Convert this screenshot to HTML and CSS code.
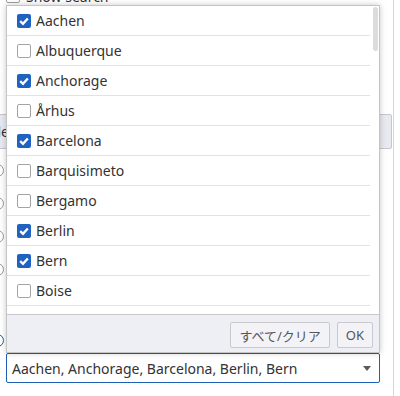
FILE: index.html
```html
<html>
<head>
    <link rel="stylesheet" href="styles.css">
</head>
<body>
<div class="page">
    <div class="opt-row">
        <span class="box"></span>
        <span>Show search</span>
    </div>

    <div class="bar"><span class="bar-label">Title</span></div>

    <div class="radio-row first"><span class="radio"></span></div>
    <div class="radio-row"><span class="radio"></span></div>
    <div class="radio-row"><span class="radio"></span></div>
    <div class="radio-row"><span class="radio"></span></div>
    <div class="radio-row last"><span class="radio on"></span></div>

    <div class="select">
        <span class="select-text">Aachen, Anchorage, Barcelona, Berlin, Bern</span>
        <span class="arrow"></span>
    </div>

    <div class="popup">
        <div class="list">
            <div class="items">
                <div class="item"><span class="check on"><svg viewBox="0 0 14 14"><path d="M3.2 7.2 L6 9.8 L10.8 4.4" /></svg></span>Aachen</div>
                <div class="item"><span class="check"></span>Albuquerque</div>
                <div class="item"><span class="check on"><svg viewBox="0 0 14 14"><path d="M3.2 7.2 L6 9.8 L10.8 4.4" /></svg></span>Anchorage</div>
                <div class="item"><span class="check"></span>Århus</div>
                <div class="item"><span class="check on"><svg viewBox="0 0 14 14"><path d="M3.2 7.2 L6 9.8 L10.8 4.4" /></svg></span>Barcelona</div>
                <div class="item"><span class="check"></span>Barquisimeto</div>
                <div class="item"><span class="check"></span>Bergamo</div>
                <div class="item"><span class="check on"><svg viewBox="0 0 14 14"><path d="M3.2 7.2 L6 9.8 L10.8 4.4" /></svg></span>Berlin</div>
                <div class="item"><span class="check on"><svg viewBox="0 0 14 14"><path d="M3.2 7.2 L6 9.8 L10.8 4.4" /></svg></span>Bern</div>
                <div class="item"><span class="check"></span>Boise</div>
                <div class="item"><span class="check"></span>Boston</div>
            </div>
            <div class="track"><div class="thumb"></div></div>
        </div>
        <div class="footer">
            <button class="btn">すべて/クリア</button>
            <button class="btn">OK</button>
        </div>
    </div>
</div>
</body>
</html>
```

FILE: styles.css
```css
body{
    margin: 0;
    overflow: hidden;
    background-color: white;
    color: #333;
    font-family: "Noto Sans", "Noto Sans CJK JP", sans-serif;
    font-size: 14px;
}

.page{
    position: relative;
    display: flow-root;
    width: 394px;
    height: 396px;
    border-right: 1px solid #d6d6d6;
    box-sizing: border-box;
}

.opt-row{
    display: flex;
    align-items: center;
    gap: 6px;
    height: 20px;
    margin-top: -14px;
    padding-left: 6px;
}

.box{
    width: 12px;
    height: 12px;
    border: 1px solid #a0a0a0;
    border-radius: 2px;
}

.bar{
    display: flex;
    align-items: center;
    height: 35px;
    margin: 108px 1px 0 -4px;
    padding-left: 4px;
    box-sizing: border-box;
    background-color: #e9eaf0;
    border: 1px solid #c6c6cc;
    border-radius: 2px;
}

.bar-label{
    margin-left: -20px;
}

.radio-row{
    display: flex;
    align-items: center;
    height: 33px;
    margin-left: -9px;
}

.radio-row.first{
    margin-top: 5px;
}

.radio-row.last{
    height: 26px;
    margin-top: 41px;
}

.radio{
    width: 11px;
    height: 11px;
    border: 1px solid #9a9a9a;
    border-radius: 50%;
}

.radio.on{
    border: 1.5px solid #1c5fb5;
}

.select{
    display: flex;
    align-items: center;
    justify-content: space-between;
    height: 30px;
    margin: 0 13px 0 6px;
    padding: 0 8px 0 5px;
    box-sizing: border-box;
    border: 1px solid #1c5fb5;
    border-radius: 2px;
}

.arrow{
    width: 0;
    height: 0;
    border-left: 4px solid transparent;
    border-right: 4px solid transparent;
    border-top: 5px solid #5a5a5a;
}

.popup{
    position: absolute;
    left: 6px;
    top: 5px;
    width: 374px;
    height: 348px;
    box-sizing: border-box;
    display: flex;
    flex-direction: column;
    background-color: white;
    border: 1px solid #c4c4c4;
    box-shadow: 0 0 6px rgba(0, 0, 0, 0.22);
}

.list{
    display: flex;
    height: 308px;
    overflow: hidden;
}

.items{
    flex: 1;
}

.item{
    display: flex;
    align-items: center;
    gap: 5px;
    height: 30px;
    padding-left: 10px;
    box-sizing: border-box;
    border-bottom: 1px solid #e2e2e2;
}

.check{
    width: 14px;
    height: 14px;
    box-sizing: border-box;
    border: 1px solid #a3a3a3;
    border-radius: 2px;
    background-color: white;
}

.check.on{
    border: none;
    background-color: #1f62bf;
}

.check svg{
    display: block;
    width: 14px;
    height: 14px;
}

.check path{
    fill: none;
    stroke: white;
    stroke-width: 2.3;
}

.track{
    width: 9px;
}

.thumb{
    width: 5px;
    height: 44px;
    margin: 1px 0 0 3px;
    border-radius: 3px;
    background-color: #dcdcdc;
}

.footer{
    flex: 1;
    display: flex;
    justify-content: flex-end;
    align-items: flex-start;
    gap: 7px;
    padding: 7px 6px 0 0;
    background-color: #eeeff4;
    border-top: 1px solid #c8c8cc;
}

.btn{
    height: 26px;
    padding: 0 8px;
    font-family: "Noto Sans", "Noto Sans CJK JP", sans-serif;
    font-size: 13px;
    color: #555;
    background-color: #f3f3f7;
    border: 1px solid #c9c9ce;
    border-radius: 2px;
}
```
